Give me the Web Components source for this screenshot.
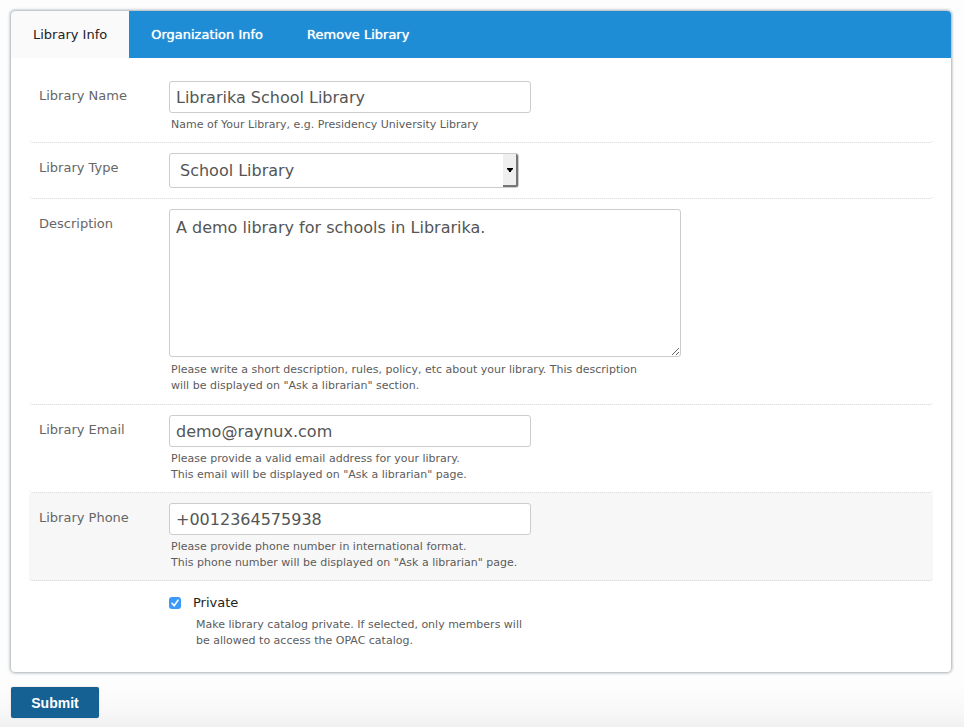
<!DOCTYPE html>
<html lang="en">
<head>
<meta charset="utf-8">
<title>Library Info</title>
<style>
html { min-height: 100%; background: #fdfdfd; }
body {
  margin: 0;
  min-height: 100vh;
  box-sizing: border-box;
  padding: 11px 13px 9px 11px;
  font: 13px/20px Verdana, "DejaVu Sans", sans-serif;
  color: #333;
  background: linear-gradient(to top, #f0f0f0, #f8f8f8 16px, #fdfdfd 40px);
}
</style>
</head>
<body>
<library-settings></library-settings>
<script>
const FIELD_CSS = `
  :host { display: block; padding: 10px 10px 9px; border-radius: 4px; }
  :host([active]) { background: #f7f7f7; }
  .row { display: grid; grid-template-columns: 120px minmax(0, 1fr); column-gap: 10px; }
  .label { padding-top: 5px; color: #666; }
  * { box-sizing: border-box; }
  input[type=text], input[type=email], input[type=tel], textarea, select {
    display: block; width: 100%; max-width: 362px; margin: 0;
    font: 16px/20px Verdana, "DejaVu Sans", sans-serif; color: #555;
    background: #fff; border: 1px solid #ccc; border-radius: 3px; outline: none;
  }
  input[type=text], input[type=email], input[type=tel] { height: 32px; padding: 4px 6px; }
  .hint { margin: 4px 2px 0; font-size: 11px; line-height: 16px; color: #5c5c5c; }
`;

class FieldElement extends HTMLElement {
  connectedCallback() {
    if (this.shadowRoot) return;
    this.attachShadow({ mode: "open" }).innerHTML = `
      <style>${FIELD_CSS}${this.styles()}</style>
      <div class="row">
        <label class="label" for="control">${this.getAttribute("label")}</label>
        <div>${this.control()}${this.childNodes.length ? '<div class="hint" id="hint"><slot></slot></div>' : ""}</div>
      </div>`;
    this.fill(this.shadowRoot.getElementById("control"), this.getAttribute("value"));
  }
  styles() { return ""; }
  fill(control, value) { control.value = value; }
}

customElements.define("text-field", class extends FieldElement {
  control() {
    return `<input id="control" type="${this.getAttribute("type") || "text"}" aria-describedby="hint">`;
  }
});

customElements.define("area-field", class extends FieldElement {
  styles() {
    return `:host { padding-bottom: 10px; }
            textarea { height: 148px; max-width: 512px; padding: 8px 6px; resize: both; }
            .hint { margin-top: 5px; max-width: 485px; }`;
  }
  control() { return `<textarea id="control" aria-describedby="hint"></textarea>`; }
});

customElements.define("select-field", class extends FieldElement {
  styles() {
    return `:host { padding-bottom: 10px; }
      .picker { display: grid; max-width: 350px; }
      .picker > * { grid-area: 1 / 1; }
      select { height: 35px; padding: 1px 26px 0 10px; appearance: none; }
      .arrow { justify-self: end; display: grid; place-items: center; width: 15px; margin: 1px 1px 1px 0;
        background: #efefef; border: solid #767676; border-width: 0 2px 2px 0; border-radius: 0 2px 2px 0; pointer-events: none; }
      svg { display: block; }`;
  }
  control() {
    return `<div class="picker"><select id="control"><option>School Library</option><option>Public Library</option><option>Personal Library</option></select>
      <span class="arrow"><svg width="6" height="4" viewBox="0 0 6 4"><path d="M0 0h6v1L4 3v1H2V3L0 1z" fill="#000"/></svg></span></div>`;
  }
});

customElements.define("check-field", class extends HTMLElement {
  connectedCallback() {
    this.attachShadow({ mode: "open" }).innerHTML = `
      <style>
        :host { display: block; padding: 12px 10px 10px 140px; }
        label { display: flex; align-items: center; gap: 12px; color: #222; }
        input { appearance: none; width: 12px; height: 12px; margin: 0; border-radius: 3px; background: #3b99fc; display: grid; place-items: center; }
        .tick { display: grid; }
        .tick > * { grid-area: 1 / 1; }
        svg { pointer-events: none; visibility: hidden; }
        input:checked + svg { visibility: visible; }
        .hint { margin: 4px 0 0 27px; max-width: 335px; font-size: 11px; line-height: 16px; color: #5c5c5c; }
      </style>
      <label><span class="tick"><input type="checkbox" checked aria-describedby="hint"><svg width="12" height="12" viewBox="0 0 12 12"><path d="M3 6.3 5.2 8.7 9 3.2" fill="none" stroke="#fff" stroke-width="1.6" stroke-linecap="round"/></svg></span>${this.getAttribute("label")}</label>
      <div class="hint" id="hint"><slot></slot></div>`;
  }
});

customElements.define("tab-bar", class extends HTMLElement {
  connectedCallback() {
    this.attachShadow({ mode: "open" }).innerHTML = `
      <style>
        :host { display: block; background: #1f8dd6; border-radius: 4px 4px 0 0; overflow: hidden; }
        nav { display: flex; }
        ::slotted(a) { padding: 14px 22px 13px; line-height: 20px; text-decoration: none; color: #fff; text-shadow: 0 0 1px #fff; }
        ::slotted(a[aria-current]) { background: #fafafa; color: #222; text-shadow: none; }
      </style>
      <nav aria-label="Settings"><slot></slot></nav>`;
  }
});

customElements.define("form-panel", class extends HTMLElement {
  connectedCallback() {
    this.attachShadow({ mode: "open" }).innerHTML = `
      <style>
        :host { display: block; background: #fff; border-radius: 4px; box-shadow: 0 0 3px 1px #a4acb3; }
        .body { padding: 13px 18px; }
        ::slotted(:not([slot]):not(:last-child)) { border-bottom: 1px dotted #d2d2d2; }
      </style>
      <slot name="tabs"></slot>
      <div class="body"><slot></slot></div>`;
  }
});

customElements.define("submit-button", class extends HTMLElement {
  connectedCallback() {
    this.attachShadow({ mode: "open" }).innerHTML = `
      <style>
        :host { display: block; margin-top: 15px; }
        button { display: block; height: 31px; padding: 0 20px; border: 0; border-radius: 2px; color: #fff; background: #156194;
          font: bold 14px/20px Helvetica, "Liberation Sans", sans-serif; box-shadow: 0 0 2px #ccc; min-width: 88px; }
      </style>
      <button type="submit"><slot></slot></button>`;
  }
});

customElements.define("library-settings", class extends HTMLElement {
  connectedCallback() {
    this.attachShadow({ mode: "open" }).innerHTML = `
      <style>:host { display: block; } form { margin: 0; }</style>
      <form>
        <form-panel>
          <tab-bar slot="tabs">
            <a href="#info" aria-current="page">Library Info</a>
            <a href="#organization">Organization Info</a>
            <a href="#remove">Remove Library</a>
          </tab-bar>
          <text-field label="Library Name" value="Librarika School Library">Name of Your Library, e.g. Presidency University Library</text-field>
          <select-field label="Library Type" value="School Library"></select-field>
          <area-field label="Description" value="A demo library for schools in Librarika.">Please write a short description, rules, policy, etc about your library. This description will be displayed on "Ask a librarian" section.</area-field>
          <text-field label="Library Email" type="email" value="demo@raynux.com">Please provide a valid email address for your library.<br>This email will be displayed on "Ask a librarian" page.</text-field>
          <text-field active label="Library Phone" type="tel" value="+0012364575938">Please provide phone number in international format.<br>This phone number will be displayed on "Ask a librarian" page.</text-field>
          <check-field label="Private">Make library catalog private. If selected, only members will be allowed to access the OPAC catalog.</check-field>
        </form-panel>
        <submit-button>Submit</submit-button>
      </form>`;
  }
});
</script>
</body>
</html>
